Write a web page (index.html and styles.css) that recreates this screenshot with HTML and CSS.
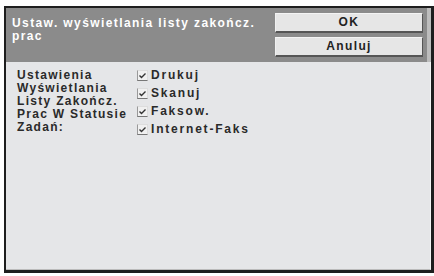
FILE: index.html
```html
<!DOCTYPE html>
<html>
<head>
<meta charset="utf-8">
<link rel="stylesheet" href="styles.css">
</head>
<body>
<div class="frame">
  <div class="header">
    <div class="title">Ustaw. wyświetlania listy zakończ.<br>prac</div>
    <div class="buttons">
      <div class="btn">OK</div>
      <div class="btn">Anuluj</div>
    </div>
  </div>
  <div class="content">
    <div class="label">Ustawienia<br>Wyświetlania<br>Listy Zakończ.<br>Prac W Statusie<br>Zadań:</div>
    <div class="checks">
      <div class="check"><span class="box"><svg width="9" height="9" viewBox="0 0 9 9"><path d="M1.5 4.5 L3.5 6.5 L7.5 2.5" fill="none" stroke="#333" stroke-width="1.4"/></svg></span>Drukuj</div>
      <div class="check"><span class="box"><svg width="9" height="9" viewBox="0 0 9 9"><path d="M1.5 4.5 L3.5 6.5 L7.5 2.5" fill="none" stroke="#333" stroke-width="1.4"/></svg></span>Skanuj</div>
      <div class="check"><span class="box"><svg width="9" height="9" viewBox="0 0 9 9"><path d="M1.5 4.5 L3.5 6.5 L7.5 2.5" fill="none" stroke="#333" stroke-width="1.4"/></svg></span>Faksow.</div>
      <div class="check"><span class="box"><svg width="9" height="9" viewBox="0 0 9 9"><path d="M1.5 4.5 L3.5 6.5 L7.5 2.5" fill="none" stroke="#333" stroke-width="1.4"/></svg></span>Internet-Faks</div>
    </div>
  </div>
</div>
</body>
</html>
```
FILE: styles.css
```css
html, body {
  margin: 0;
  padding: 0;
  background: #ffffff;
}
body {
  width: 434px;
  height: 276px;
  overflow: hidden;
  font-family: "Liberation Sans", Arial, sans-serif;
}
.frame {
  margin: 6px 0 0 4px;
  width: 425px;
  height: 262px;
  border-top: 2px solid #1e1e1e;
  border-left: 2px solid #1e1e1e;
  border-right: 3px solid #1e1e1e;
  border-bottom: 3px solid #1e1e1e;
  display: flex;
  flex-direction: column;
  background: #e5e6e8;
}
.header {
  height: 54px;
  background: #8b8b8b;
  display: flex;
  justify-content: space-between;
  align-items: flex-start;
  border-right: 4px solid #bdbdbd;
}
.title {
  color: #ffffff;
  font-weight: bold;
  font-size: 12px;
  line-height: 13px;
  letter-spacing: 1.4px;
  padding: 9px 0 0 6px;
}
.buttons {
  display: flex;
  flex-direction: column;
  gap: 4px;
  padding: 5px 4px 0 0;
}
.btn {
  width: 146px;
  height: 17px;
  background: #e6e6e6;
  border-top: 1px solid #f4f4f4;
  border-left: 1px solid #f0f0f0;
  border-right: 1px solid #555;
  border-bottom: 2px solid #555;
  text-align: center;
  font-weight: bold;
  font-size: 12px;
  line-height: 17px;
  letter-spacing: 1.4px;
  color: #222;
}
.content {
  flex: 1;
  display: flex;
  padding: 7px 0 0 11px;
  border-right: 1px solid #f4f4f4;
  border-bottom: 1px solid #bbb;
  color: #222;
  font-size: 12px;
}
.label {
  width: 120px;
  line-height: 13px;
  font-weight: bold;
  color: #2a2a2a;
  white-space: nowrap;
  letter-spacing: 1.3px;
}
.checks {
  display: flex;
  flex-direction: column;
  letter-spacing: 1.8px;
}
.check {
  display: flex;
  align-items: center;
  height: 18px;
  margin-top: -3px;
  margin-bottom: 3px;
  font-weight: bold;
  color: #2a2a2a;
}
.box {
  width: 9px;
  height: 9px;
  background: #f0f0f0;
  border-left: 1px solid #999;
  border-bottom: 1px solid #777;
  border-top: 1px solid #ddd;
  border-right: 1px solid #ddd;
  margin-right: 3px;
  display: flex;
}
```
